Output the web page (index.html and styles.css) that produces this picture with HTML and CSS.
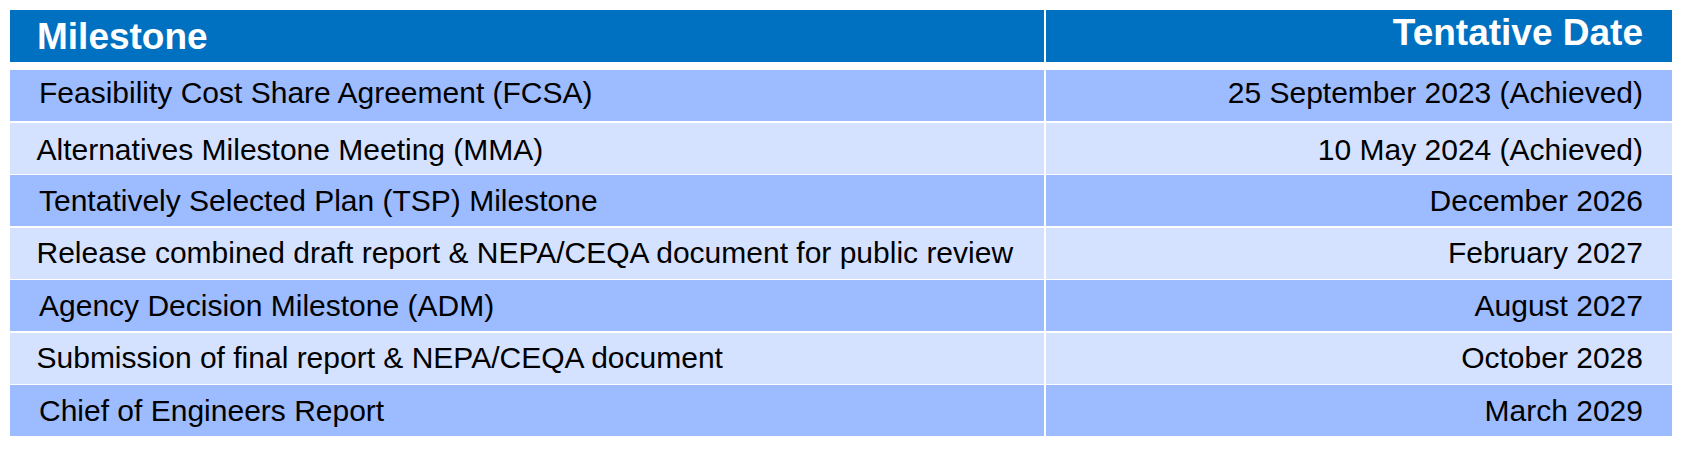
FILE: index.html
```html
<!DOCTYPE html>
<html lang="en">
<head>
<meta charset="utf-8">
<title>Milestones</title>
<link rel="stylesheet" href="styles.css">
</head>
<body>
<div class="page">
  <div class="head">
    <div class="hcell hleft">Milestone</div>
    <div class="hcell hright">Tentative Date</div>
  </div>
  <div class="rows">
    <div class="cell name dark r1">Feasibility Cost Share Agreement (FCSA)</div>
    <div class="cell date dark r1">25 September 2023 (Achieved)</div>
    <div class="cell name light r2">Alternatives Milestone Meeting (MMA)</div>
    <div class="cell date light r2">10 May 2024 (Achieved)</div>
    <div class="cell name dark">Tentatively Selected Plan (TSP) Milestone</div>
    <div class="cell date dark">December 2026</div>
    <div class="cell name light">Release combined draft report &amp; NEPA/CEQA document for public review</div>
    <div class="cell date light">February 2027</div>
    <div class="cell name dark">Agency Decision Milestone (ADM)</div>
    <div class="cell date dark">August 2027</div>
    <div class="cell name light">Submission of final report &amp; NEPA/CEQA document</div>
    <div class="cell date light">October 2028</div>
    <div class="cell name dark">Chief of Engineers Report</div>
    <div class="cell date dark">March 2029</div>
  </div>
</div>
</body>
</html>
```
FILE: styles.css
```css
html, body {
  margin: 0;
  padding: 0;
  background: #ffffff;
}
body {
  font-family: "Liberation Sans", Arial, sans-serif;
  color: #000000;
}
.page {
  padding: 10px 0 0 10px;
  width: 1662px;
}
.head {
  display: grid;
  grid-template-columns: 1034px 626px;
  column-gap: 2px;
  height: 51.5px;
}
.hcell {
  background: #0070c0;
  color: #ffffff;
  font-weight: bold;
  font-size: 37px;
  display: flex;
  align-items: center;
  line-height: 1;
}
.hleft {
  padding-left: 27px;
  padding-top: 1px;
}
.hright {
  justify-content: flex-end;
  padding-right: 29px;
  padding-bottom: 6px;
}
.rows {
  margin-top: 8.5px;
  display: grid;
  grid-template-columns: 1034px 626px;
  grid-auto-rows: 51px;
  column-gap: 2px;
  row-gap: 1.5px;
}
.cell {
  display: flex;
  align-items: center;
  font-size: 30px;
  line-height: 1;
  white-space: nowrap;
}
.dark { background: #9dbbff; }
.light { background: #d5e2ff; }
.name.dark { padding-left: 29px; }
.name.light { padding-left: 26.5px; }
.date {
  justify-content: flex-end;
  padding-right: 29px;
}
.r1 { padding-bottom: 5px; }
.r2 { padding-top: 4px; }
```
